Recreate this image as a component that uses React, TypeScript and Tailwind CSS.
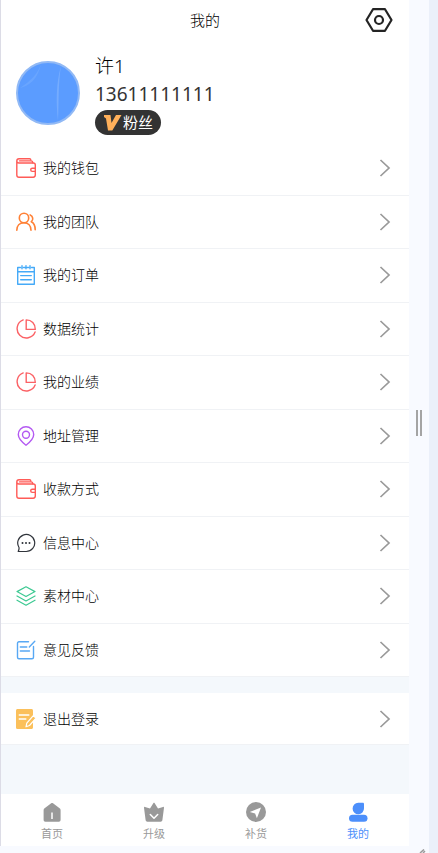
import type { ReactNode } from "react";

const stroke = {
  fill: "none",
  stroke: "currentColor",
  strokeWidth: 1.4,
  strokeLinecap: "round",
  strokeLinejoin: "round",
} as const;

const Icon = ({ className, children }: { className: string; children: ReactNode }) => (
  <svg viewBox="0 0 20 20" aria-hidden="true" className={`size-5 shrink-0 ${className}`} {...stroke}>
    {children}
  </svg>
);

const WalletIcon = () => (
  <Icon className="text-[#ff5b57]">
    <path d="M.8 3v14c0 1.300.8 2.200 2.200 2.200h14.200c1.300 0 2.100-.8 2.100-2.100V7c0-1.200-.8-2-2-2H3C1.600 5 .8 4.300.8 3S1.700.8 3 .8h10.500c.8 0 1.300.5 1.300 1.200" />
    <path d="M3.500 2.900h11.600c1 0 1.600.7 1.600 1.900M19.200 10.300h-2.900c-1 0-1.600.6-1.600 1.500s.6 1.600 1.600 1.600h2.900" />
  </Icon>
);

const TeamIcon = () => (
  <Icon className="text-[#ff8136]">
    <g strokeWidth="1.600">
      <circle cx="8" cy="6" r="4.700" />
      <path d="M.8 18.300c0-4.600 2.800-7.600 7.100-7.600s7.100 3 7.100 7.600M14.200 2.900c2.900 1.100 3.400 5 1.100 6.800 2.500 1.200 3.900 4.200 3.900 8" />
    </g>
  </Icon>
);

const OrderIcon = () => (
  <Icon className="text-[#45aaf8]">
    <path d="M4.500 2.500H1.700v16.800h16.600V2.500h-2.800M7.500 2.500h1.400M11.300 2.500h1.300M6 .8v3M10 .8v3M14 .8v3M1.700 6.700h16.600M4.700 10.600h10.600M4.700 14.800h10.600" />
  </Icon>
);

const ChartIcon = () => (
  <Icon className="text-[#fb6165]">
    <path d="M7.200.9A9.300 9.300 0 1 0 19.100 13M10.200.9v9.500h9.100c0-5.500-3.600-9.500-9.100-9.500Z" />
  </Icon>
);

const PinIcon = () => (
  <Icon className="text-[#b45af2]">
    <path d="M10 19.200C5.800 16 2.300 12.500 2.300 8.500a7.700 7.700 0 0 1 15.400 0c0 4-3.500 7.500-7.700 10.700Z" />
    <circle cx="10" cy="8.800" r="3.500" />
  </Icon>
);

const MessageIcon = () => (
  <Icon className="text-[#30343b]">
    <path strokeWidth="1.200" d="M2.200 18.500h8a8.500 8.500 0 1 0-7.200-4c.3 1.500-.2 2.700-.8 4Z" />
    <path strokeWidth="2" d="M6.500 10h.01M10 10h.01M13.500 10h.01" />
  </Icon>
);

const LayersIcon = () => (
  <Icon className="text-[#3cc992]">
    <path strokeWidth="1.200" d="M10 .8 19 5.600l-9 5-9-5ZM1 10l9 5 9-5M1 14.200l9 5 9-5" />
  </Icon>
);

const FeedbackIcon = () => (
  <Icon className="text-[#58a8f4]">
    <path d="M12.500 1.800H3c-.9 0-1.500.6-1.500 1.500v14c0 .9.6 1.500 1.500 1.500h13c.9 0 1.500-.6 1.500-1.500V6.500M4.300 7h6.500M4.300 11h9.200M13.300 7 18.800 1.300" />
  </Icon>
);

const LogoutIcon = () => (
  <svg viewBox="0 0 20 20" aria-hidden="true" className="size-5 shrink-0">
    <path fill="#fbc05b" d="M1.500 0h14c.8 0 1.500.6 1.500 1.500v17c0 .9-.7 1.500-1.500 1.500h-14A1.500 1.500 0 0 1 0 18.500v-17C0 .6.700 0 1.500 0Z" />
    <path fill="none" stroke="#fff" strokeWidth="1.500" strokeLinecap="round" d="M3.300 6h9.500M3.300 10h6.500" />
    <path fill="#fbc05b" stroke="#fff" strokeWidth="1.200" strokeLinejoin="round" d="m10 17.800.8-3.600 6.500-7.500 2.700 2.400-6.500 7.400Z" />
  </svg>
);

const menu = [
  { label: "我的钱包", icon: <WalletIcon /> },
  { label: "我的团队", icon: <TeamIcon /> },
  { label: "我的订单", icon: <OrderIcon /> },
  { label: "数据统计", icon: <ChartIcon /> },
  { label: "我的业绩", icon: <ChartIcon /> },
  { label: "地址管理", icon: <PinIcon /> },
  { label: "收款方式", icon: <WalletIcon /> },
  { label: "信息中心", icon: <MessageIcon /> },
  { label: "素材中心", icon: <LayersIcon /> },
  { label: "意见反馈", icon: <FeedbackIcon /> },
];

const tabs = [
  {
    label: "首页",
    icon: (
      <>
        <path fill="currentColor" d="M9.200 1.300c.6-.5 1.200-.5 1.800 0l6.600 4.900c.7.500 1 1.100 1 2v9.600c0 1.200-.6 1.900-1.800 1.900H3.400c-1.200 0-1.800-.7-1.800-1.900V8.200c0-.9.3-1.500 1-2Z" />
        <path stroke="#fff" strokeWidth="1.500" d="M10 10.500v6.500" />
      </>
    ),
  },
  {
    label: "升级",
    icon: (
      <>
        <path fill="currentColor" d="M10.700 1.300 14 6.500l5-1.600c.7-.2 1.100.2 1 .9L18.400 18c-.2 1.100-.8 1.700-1.800 1.700H3.400c-1 0-1.600-.6-1.800-1.700L0 5.800c-.1-.7.300-1.100 1-.9l5 1.600 3.300-5.200c.4-.6 1-.6 1.400 0Z" />
        <path fill="none" stroke="#fff" strokeWidth="1.500" strokeLinecap="round" strokeLinejoin="round" d="m6.300 12.500 3.700 3.800 3.700-3.800" />
      </>
    ),
  },
  {
    label: "补货",
    icon: (
      <>
        <circle cx="10" cy="10" r="10" fill="currentColor" />
        <path fill="#fff" d="M15 5.500 3.800 10l5.300 1.600 1.800 4.600Z" />
      </>
    ),
  },
  {
    label: "我的",
    active: true,
    icon: (
      <>
        <path fill="currentColor" d="M10.200.8h4.600c.7 0 1.200.5 1.200 1.200v4.300a5.700 5.700 0 1 1-5.800-5.500Z" />
        <rect x="1" y="12.800" width="18.500" height="7" rx="3.500" fill="currentColor" />
      </>
    ),
  },
];

const MenuRow = ({ icon, label }: { icon: ReactNode; label: string }) => (
  <button type="button" className="flex min-h-[52px] w-full items-center border-b border-[#f0f2f5] bg-white pr-[18px] pl-[15px] text-left">
    {icon}
    <span className="ml-[7px] flex-1 text-[14px] leading-5">{label}</span>
    <svg viewBox="0 0 12 18" fill="none" stroke="#999" strokeWidth="1.700" aria-hidden="true" className="h-[18px] w-3">
      <path d="m1.500 1 8.500 8-8.500 8" />
    </svg>
  </button>
);

export default function App() {
  return (
    <div className="relative flex min-h-screen bg-[#f8faff] font-['Noto_Sans','Noto_Sans_CJK_SC',sans-serif] font-light text-black">
      <div className="mb-[7px] flex flex-1 flex-col border-l border-[#dcdce6] bg-[#f4f8fc]">
        <header className="grid h-10 grid-cols-[1fr_auto_1fr] items-center bg-white px-4">
          <h1 className="col-start-2 text-[15px] leading-5">我的</h1>
          <button type="button" aria-label="设置" className="justify-self-end">
            <svg viewBox="0 0 28 24" fill="none" stroke="#242424" strokeWidth="2.200" strokeLinejoin="round" className="h-6 w-7">
              <path d="M8 1.200h12L26.500 12 20 22.800H8L1.500 12Z" />
              <circle cx="14" cy="12" r="4" />
            </svg>
          </button>
        </header>

        <section className="flex h-[102px] items-start bg-white px-[15px] pt-3">
          <svg viewBox="0 0 64 64" role="img" aria-label="头像" className="mt-[9px] size-16">
            <circle cx="32" cy="32" r="31" fill="#5b9cff" />
            <path d="M25 3c-3 9-9 16-21 24 9-2 18-9 21-24Z" fill="#69a5ff" />
            <path d="M45 5c-5 17-5 37-3 55 1-18 0-37 3-55Z" fill="#75acff" />
            <circle cx="32" cy="32" r="31" fill="none" stroke="#91b9f5" strokeWidth="2" />
          </svg>
          <div className="ml-[15px]">
            <p className="text-[19px] leading-7">许1</p>
            <p className="text-[19px] leading-7 font-normal text-[#333]">13611111111</p>
            <span className="mt-[2px] flex h-[25px] w-fit items-center rounded-full bg-[#333] pr-2 pl-[9px] text-[15px] font-normal text-white">
              <svg viewBox="0 0 18 16" fill="#ffb05a" aria-hidden="true" className="mr-px h-4 w-[18px]">
                <path d="M0 0h6.500l1 8L12 0h5.500L8.300 15.500H4L2 3.500 0 2Z" />
              </svg>
              粉丝
            </span>
          </div>
        </section>

        <div className="grid min-h-[535px] auto-rows-fr">
          {menu.map((item) => (
            <MenuRow key={item.label} {...item} />
          ))}
        </div>

        <div className="mt-4">
          <MenuRow icon={<LogoutIcon />} label="退出登录" />
        </div>

        <nav className="mt-auto grid h-[52px] grid-cols-4 bg-white">
          {tabs.map((tab) => (
            <a
              key={tab.label}
              href="#"
              aria-current={tab.active ? "page" : undefined}
              className={`flex flex-col items-center pt-2 font-normal ${tab.active ? "text-[#4c8ffb]" : "text-[#999]"}`}
            >
              <svg viewBox="0 0 20 20" aria-hidden="true" className="size-5">
                {tab.icon}
              </svg>
              <span className="mt-1 text-[11px] leading-4">{tab.label}</span>
            </a>
          ))}
        </nav>
      </div>

      <div className="flex w-5 items-center justify-center gap-[2px] pb-2">
        <span className="h-[26px] w-[2px] bg-[#a4a4a4]" />
        <span className="h-[26px] w-[2px] bg-[#a4a4a4]" />
      </div>
      <div className="w-[9px] bg-[#ebf0fa]" />

      {/* corner resize grip */}
      <svg viewBox="0 0 8 4" stroke="#9a9a9a" strokeWidth="1.500" aria-hidden="true" className="absolute right-3 bottom-0 h-1 w-2">
        <path d="M2 4 6 .500M5 4l2-2" />
      </svg>
    </div>
  );
}
